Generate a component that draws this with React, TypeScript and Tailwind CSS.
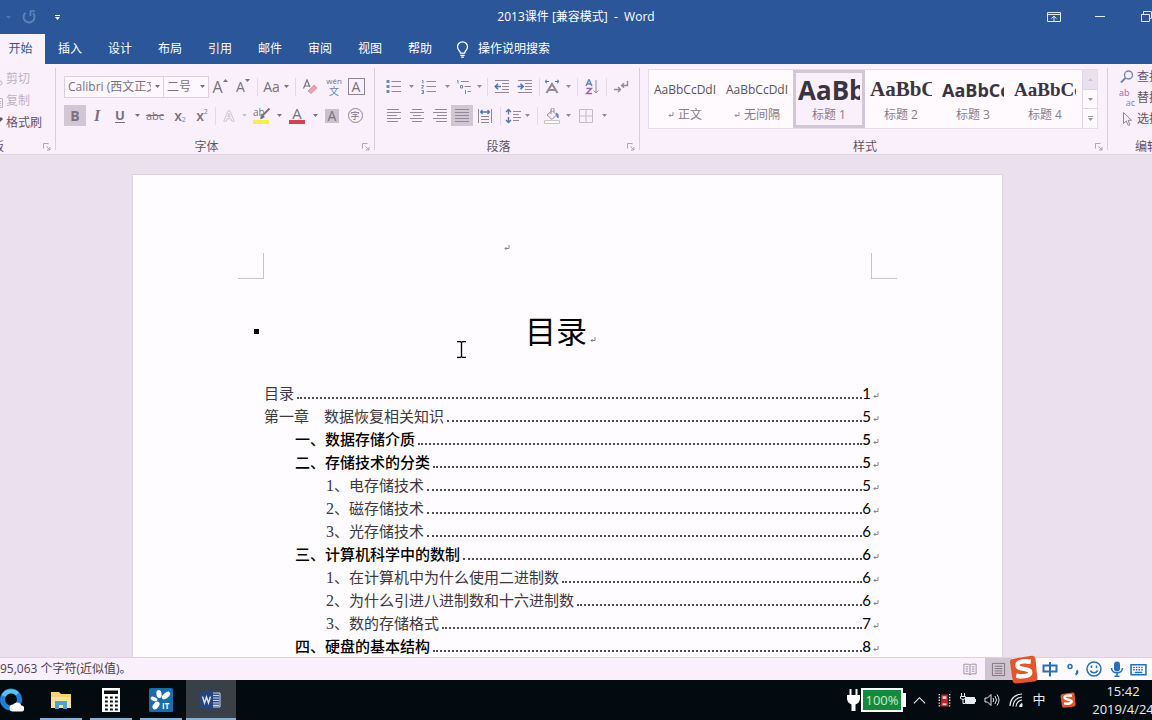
import type { ReactNode } from "react";
import { clsx } from "clsx";

const tabs = ["插入", "设计", "布局", "引用", "邮件", "审阅", "视图", "帮助"];

const styles = [
  { name: "正文", sample: "AaBbCcDdI", look: "text-[12px] text-[#5a505e]", mark: true },
  { name: "无间隔", sample: "AaBbCcDdI", look: "text-[12px] text-[#5a505e]", mark: true },
  { name: "标题 1", sample: "AaBb", look: "text-[26px] font-bold" },
  { name: "标题 2", sample: "AaBbC", look: "text-[21px] font-bold font-['Liberation_Serif',serif]" },
  { name: "标题 3", sample: "AaBbCc", look: "text-[18px] font-bold" },
  { name: "标题 4", sample: "AaBbCc", look: "text-[19px] font-bold font-['Liberation_Serif',serif]" },
];

const activeStyle = "标题 1";

const toc = [
  { level: 0, text: "目录", page: 1 },
  { level: 0, text: "第一章　数据恢复相关知识", page: 5 },
  { level: 1, text: "一、数据存储介质", page: 5 },
  { level: 1, text: "二、存储技术的分类", page: 5 },
  { level: 2, num: "1", text: "、电存储技术", page: 5 },
  { level: 2, num: "2", text: "、磁存储技术", page: 6 },
  { level: 2, num: "3", text: "、光存储技术", page: 6 },
  { level: 1, text: "三、计算机科学中的数制", page: 6 },
  { level: 2, num: "1", text: "、在计算机中为什么使用二进制数", page: 6 },
  { level: 2, num: "2", text: "、为什么引进八进制数和十六进制数", page: 6 },
  { level: 2, num: "3", text: "、数的存储格式", page: 7 },
  { level: 1, text: "四、硬盘的基本结构", page: 8 },
];

function Icon({ children, size = 16, className }: { children: ReactNode; size?: number; className?: string }) {
  return (
    <svg
      width={size}
      height={size}
      viewBox="0 0 16 16"
      fill="none"
      stroke="currentColor"
      aria-hidden="true"
      className={clsx("shrink-0", className)}
    >
      {children}
    </svg>
  );
}

function Caret({ className }: { className?: string }) {
  return (
    <svg width="5" height="3" viewBox="0 0 5 3" fill="currentColor" aria-hidden="true" className={clsx("shrink-0", className)}>
      <path d="M0 0h5L2.5 3z" />
    </svg>
  );
}

function ReturnMark({ className }: { className?: string }) {
  return (
    <svg width="6" height="6" viewBox="0 0 6 6" fill="none" stroke="currentColor" aria-hidden="true" className={clsx("shrink-0", className)}>
      <path d="M5 0v3.5H1M2.5 2 1 3.5 2.5 5" strokeWidth=".8" />
    </svg>
  );
}

function Tool({ label, w, children, active }: { label: string; w: string; children: ReactNode; active?: boolean }) {
  return (
    <button
      type="button"
      aria-label={label}
      className={clsx("flex h-[21px] shrink-0 items-center justify-center leading-none", w, active && "bg-[#d2c6d5]")}
    >
      {children}
    </button>
  );
}

function Sep({ w }: { w: string }) {
  return (
    <span className={clsx("flex h-[18px] shrink-0 justify-center", w)}>
      <span className="w-px bg-[#e3d8e6]" />
    </span>
  );
}

function Group({ label, className, labelClass, children, launcher = true }: {
  label: string;
  className?: string;
  labelClass?: string;
  children: ReactNode;
  launcher?: boolean;
}) {
  return (
    <section aria-label={label} className={clsx("relative flex h-full shrink-0 flex-col", className)}>
      <div className="flex-1">{children}</div>
      <div className="flex h-4 items-center pt-px">
        <span className={clsx("flex-1 whitespace-nowrap", labelClass ?? "text-center")}>{label}</span>
        {launcher && (
          <button type="button" aria-label={`${label}选项`} className="flex w-[18px] justify-center text-[#9d92a1]">
            <Icon size={8}>
              <path d="M1 11V1h10M7 7l7 7M14 8v6H8" strokeWidth="1.6" />
            </Icon>
          </button>
        )}
      </div>
      {launcher && <span className="absolute top-1 right-0 bottom-1 w-px bg-[#d9cddb]" />}
    </section>
  );
}

function TitleBar() {
  return (
    <header className="grid h-[34px] shrink-0 grid-cols-[1fr_auto_1fr] items-center bg-[#2b579a] text-white">
      <div className="flex items-center pl-1.5">
        <Caret className="text-[#5577b0]" />
        <button type="button" aria-label="重复" className="ml-2.5 text-[#5f82b9]">
          <Icon>
            <path d="M4.500 3.800A5.500 5.500 0 1 0 12 4.200" strokeWidth="1.9" />
            <path d="M9.500 7V2H14" strokeWidth="1.7" />
          </Icon>
        </button>
        <button type="button" aria-label="自定义快速访问工具栏" className="ml-[18px] flex flex-col gap-px">
          <span className="h-px w-[5px] bg-white" />
          <Caret />
        </button>
      </div>
      <h1 className="whitespace-pre text-[12px]">{"2013课件 [兼容模式]  -  Word"}</h1>
      <div className="flex justify-end overflow-hidden">
        <div className="-mr-[17px] flex text-[#dfe8f5]">
          <button type="button" aria-label="功能区显示选项" className="flex w-[46px] justify-center">
            <Icon>
              <path d="M1.5 3.5h13v9h-13zM1.5 5.5h13M8 12V7.5M5.5 9.5 8 7.2l2.5 2.3" />
            </Icon>
          </button>
          <button type="button" aria-label="最小化" className="flex w-[46px] justify-center">
            <Icon>
              <path d="M3 7.5h10" />
            </Icon>
          </button>
          <button type="button" aria-label="还原" className="flex w-[46px] justify-center">
            <Icon>
              <path d="M3.5 5.5h8v7h-8zM5.5 5.500v-3h8v7h-2" />
            </Icon>
          </button>
        </div>
      </div>
    </header>
  );
}

function TabBar() {
  return (
    <nav className="flex h-[30px] shrink-0 items-center bg-[#2b579a] text-white">
      <button type="button" className="h-full w-[45px] bg-[#faf1fc] pr-1 text-[#2b579a]">
        开始
      </button>
      {tabs.map((tab) => (
        <button key={tab} type="button" className="h-full w-[50px]">
          {tab}
        </button>
      ))}
      <button type="button" className="ml-[9px] flex h-full items-center gap-[7px]">
        <Icon size={17}>
          <path d="M6 11.5c0-2-2.7-3-2.7-6a4.7 4.7 0 0 1 9.4 0c0 3-2.7 4-2.7 6zM6 13.5h4M6.7 15.2h2.6" strokeWidth="1.2" />
        </Icon>
        操作说明搜索
      </button>
    </nav>
  );
}

function ClipboardGroup() {
  return (
    <Group label="板" className="w-14" labelClass="-ml-2">
      <div className="flex flex-col pt-1">
        <button type="button" className="-ml-3 flex h-[22px] items-center gap-0.5 whitespace-nowrap text-[#bdb2c0]">
          <Icon>
            <path d="M3 2l7 9M11 2 6 10" />
            <circle cx="12" cy="12" r="2" />
          </Icon>
          剪切
        </button>
        <button type="button" className="-ml-3 flex h-[22px] items-center gap-0.5 whitespace-nowrap text-[#bdb2c0]">
          <Icon>
            <path d="M2.500 2.500h6v8h-6zM7.500 5.500h7v9h-7zM9 8.500h4M9 10.500h4M9 12.500h4" />
          </Icon>
          复制
        </button>
        <button type="button" className="-ml-3 flex h-[22px] items-center gap-0.5 whitespace-nowrap text-[#5f5563]">
          <Icon>
            <path d="M9 8l5-5" strokeWidth="3" />
            <path d="M7 6l4 4-5 4-4-4z" className="fill-[#e9c98a]" />
          </Icon>
          格式刷
        </button>
      </div>
    </Group>
  );
}

function FontGroup() {
  return (
    <Group label="字体" className="w-[319px]">
      <div className="flex flex-col gap-2 pt-3 pl-2 text-[#7a707f]">
        <div className="flex h-[21px] items-center">
          <span className="relative flex items-center">
            <select aria-label="字体名称" className="h-[22px] w-[100px] appearance-none border border-[#ddd1df] bg-[#fdf8fe] pr-3 pl-[3px] text-[12px]">
              <option>Calibri (西文正文)</option>
            </select>
            <Caret className="pointer-events-none absolute right-1" />
          </span>
          <span className="relative -ml-px flex items-center">
            <select aria-label="字号" className="h-[22px] w-[46px] appearance-none border border-[#ddd1df] bg-[#fdf8fe] pr-3 pl-[3px] text-[12px]">
              <option>二号</option>
            </select>
            <Caret className="pointer-events-none absolute right-1" />
          </span>
          <Tool label="增大字号" w="w-[22px]">
            <span className="text-[16px]">A</span>
            <Caret className="mb-3 rotate-180" />
          </Tool>
          <Tool label="减小字号" w="w-6">
            <span className="text-[14px]">A</span>
            <Caret className="mb-3" />
          </Tool>
          <Sep w="w-1" />
          <Tool label="更改大小写" w="w-[34px]">
            <span className="mr-1 text-[14px]">Aa</span>
            <Caret />
          </Tool>
          <Sep w="w-1" />
          <Tool label="清除所有格式" w="w-[26px]">
            <Icon>
              <path d="M1.500 9.500 5 1l3 7M3 7h4" strokeWidth="1.200" />
              <path d="M6 12l6-6 3 3-6 5.500z" className="fill-[#eba4ad] stroke-[#e79aa6]" />
            </Icon>
          </Tool>
          <Tool label="拼音指南" w="w-[22px]">
            <span className="flex flex-col items-center text-[8px] leading-[9px]">
              <span>wén</span>
              <span className="text-[10px] leading-[12px] text-[#5f86b8]">文</span>
            </span>
          </Tool>
          <Tool label="字符边框" w="w-[22px]">
            <span className="flex h-[17px] w-[17px] items-center justify-center border border-[#8d8392] text-[14px] font-medium">A</span>
          </Tool>
        </div>
        <div className="flex h-[21px] items-center">
          <Tool label="加粗" w="w-[22px]" active>
            <b className="text-[14px]">B</b>
          </Tool>
          <Tool label="倾斜" w="w-[22px]">
            <i className="font-['Liberation_Serif',serif] text-[16px] font-bold">I</i>
          </Tool>
          <Tool label="下划线" w="w-6">
            <span className="border-b border-current text-[13px] leading-[13px] font-bold">U</span>
          </Tool>
          <Tool label="下划线样式" w="w-[10px]">
            <Caret />
          </Tool>
          <Tool label="删除线" w="w-[26px]">
            <span className="text-[11px] line-through">abc</span>
          </Tool>
          <Tool label="下标" w="w-6">
            <span className="text-[14px] font-semibold">x</span>
            <span className="mt-2 text-[7px] text-[#5f86b8]">2</span>
          </Tool>
          <Tool label="上标" w="w-5">
            <span className="text-[14px] font-semibold">x</span>
            <span className="mb-2 text-[7px] text-[#5f86b8]">2</span>
          </Tool>
          <Sep w="w-1.5" />
          <Tool label="文本效果" w="w-[22px]">
            <Icon size={14} className="text-[#c9bfcc]">
              <path d="M2 14 6.800 2h2.400L14 14h-2.800l-1-3H5.800l-1 3zM6.600 8.700h2.800L8 4.800z" />
            </Icon>
          </Tool>
          <Tool label="文本效果选项" w="w-2">
            <Caret className="text-[#cdc3d0]" />
          </Tool>
          <Tool label="突出显示颜色" w="w-[26px]">
            <span className="flex w-4 flex-col">
              <span className="flex h-[13px] items-start">
                <span className="text-[10px] leading-[11px]">ab</span>
                <Icon size={12} className="-ml-1.5">
                  <path d="M4 12 14 2M3 15l1-4 2 2z" strokeWidth="2.500" />
                </Icon>
              </span>
              <span className="h-1 bg-[#f6ee50]" />
            </span>
          </Tool>
          <Tool label="突出显示选项" w="w-[10px]">
            <Caret />
          </Tool>
          <Tool label="字体颜色" w="w-[26px]">
            <span className="flex w-4 flex-col items-center">
              <span className="text-[15px] leading-[13px]">A</span>
              <span className="h-1 w-full bg-[#cf4552]" />
            </span>
          </Tool>
          <Tool label="字体颜色选项" w="w-[10px]">
            <Caret />
          </Tool>
          <Tool label="字符底纹" w="w-6">
            <span className="flex h-[14px] w-[14px] items-center justify-center bg-[#cbc0ce] text-[14px] font-medium">A</span>
          </Tool>
          <Tool label="带圈字符" w="w-[22px]">
            <span className="flex h-[15px] w-[15px] items-center justify-center rounded-full border border-[#8d8392] text-[9px]">字</span>
          </Tool>
        </div>
      </div>
    </Group>
  );
}

function ParagraphGroup() {
  return (
    <Group label="段落" className="w-[265px]">
      <div className="flex flex-col gap-2 pt-3 pl-2 text-[#928897]">
        <div className="flex h-[21px] items-center">
          <Tool label="项目符号" w="w-[22px]">
            <Icon>
              <path d="M5.500 2.500H15M5.500 7.500H15M5.500 12.500H15" />
              <path d="M.5 2.500h3M.5 7.500h3M.5 12.500h3" className="stroke-[#6d8ab5]" strokeWidth="3" />
            </Icon>
          </Tool>
          <Tool label="项目符号库" w="w-3">
            <Caret />
          </Tool>
          <Tool label="编号" w="w-6">
            <Icon>
              <path d="M5.500 2.500H15M5.500 7.500H15M5.500 12.500H15" />
              <path d="M1 1.500h1v3M.5 6.500h2v1l-2 1.500h2M.5 11.500h2v3h-2M1 13h1" className="stroke-[#6d8ab5]" />
            </Icon>
          </Tool>
          <Tool label="编号库" w="w-3">
            <Caret />
          </Tool>
          <Tool label="多级列表" w="w-[22px]">
            <Icon>
              <path d="M5 2.500h8M8.500 7.500H15M11.500 12.500H15" />
              <path d="M1 1.500h1v3M4.500 6.500h2v2.500h-2zM9.500 11v4" className="stroke-[#6d8ab5]" />
            </Icon>
          </Tool>
          <Tool label="多级列表库" w="w-2">
            <Caret />
          </Tool>
          <Sep w="w-2" />
          <Tool label="减少缩进量" w="w-[22px]">
            <Icon>
              <path d="M1 1.500h14M8 4.500h7M8 7.500h7M8 10.500h7M1 13.500h14" />
              <path d="M7 7.500H1.500M4 4.800 1.300 7.500 4 10.200" className="stroke-[#4f78b0]" strokeWidth="1.600" />
            </Icon>
          </Tool>
          <Tool label="增加缩进量" w="w-6">
            <Icon>
              <path d="M1 1.500h14M8 4.500h7M8 7.500h7M8 10.500h7M1 13.500h14" />
              <path d="M.5 7.500H6M3.500 4.800l2.700 2.700-2.700 2.700" className="stroke-[#4f78b0]" strokeWidth="1.600" />
            </Icon>
          </Tool>
          <Sep w="w-1" />
          <Tool label="中文版式" w="w-[22px]">
            <Icon>
              <path d="M2.500 14 8 5l5.500 9M4.500 11h7" strokeWidth="2" />
              <path d="M1 2.500h4M3 .8 1 2.500l2 1.700M15 2.500h-4M13 .8l2 1.700-2 1.700" className="stroke-[#4f78b0]" />
            </Icon>
          </Tool>
          <Tool label="中文版式选项" w="w-[10px]">
            <Caret />
          </Tool>
          <Sep w="w-2" />
          <Tool label="排序" w="w-[22px]">
            <Icon>
              <path d="M2 7 5 .5 8 7M3.200 5h3.600" className="stroke-[#5f86b8]" strokeWidth="1.400" />
              <path d="M2.500 9.500h5l-5 5h5.500" className="stroke-[#9a66a8]" strokeWidth="1.400" />
              <path d="M12 1v13M9.700 11.500 12 14l2.300-2.500" />
            </Icon>
          </Tool>
          <Sep w="w-1.5" />
          <Tool label="显示编辑标记" w="w-6">
            <Icon>
              <path d="M14.500 2v4.500H9M11 4.200 8.700 6.500 11 8.800M1 10.500h6M5 8l2.500 2.500L5 13" strokeWidth="1.400" />
            </Icon>
          </Tool>
        </div>
        <div className="flex h-[21px] items-center">
          <Tool label="左对齐" w="w-[22px]">
            <Icon>
              <path d="M1 1.500h12M1 4.500h14M1 7.500h10M1 10.500h14M1 13.500h11" />
            </Icon>
          </Tool>
          <Tool label="居中" w="w-6">
            <Icon>
              <path d="M3 1.500h10M1 4.500h14M4 7.500h8M1 10.500h14M3 13.500h10" />
            </Icon>
          </Tool>
          <Tool label="右对齐" w="w-[22px]">
            <Icon>
              <path d="M3 1.500h12M1 4.500h14M5 7.500h10M1 10.500h14M4 13.500h11" />
            </Icon>
          </Tool>
          <Tool label="两端对齐" w="w-[22px]" active>
            <Icon>
              <path d="M1 1.500h14M1 4.500h14M1 7.500h14M1 10.500h14M1 13.500h14" />
            </Icon>
          </Tool>
          <Tool label="分散对齐" w="w-6">
            <Icon>
              <path d="M1.500 1v14M14.500 1v14M4 8.500h8M4 11.500h8M4 14.500h8" />
              <path d="M3.500 4h9M5.500 2 3.500 4l2 2M10.500 2l2 2-2 2" className="stroke-[#4f78b0]" strokeWidth="1.300" />
            </Icon>
          </Tool>
          <Sep w="w-1.5" />
          <Tool label="行和段落间距" w="w-5">
            <Icon>
              <path d="M8 3.500h8M8 6.500h6M8 9.500h8M8 12.500h6" />
              <path d="M3.500 1.500v5M1 4l2.500-2.500L6 4M3.500 9v5.500M1 12l2.500 2.500L6 12" className="stroke-[#4f78b0]" strokeWidth="1.400" />
            </Icon>
          </Tool>
          <Tool label="行距选项" w="w-2">
            <Caret />
          </Tool>
          <Sep w="w-3" />
          <Tool label="底纹" w="w-[18px]">
            <Icon>
              <path d="M3 7l5-4.500L12.500 7 8 11.500zM7 6V1.500a1.500 1.500 0 0 1 3 0V4" />
              <path d="M12.500 5c2 1 2 3 1.500 5-1-1-1.500-2-1.500-5z" className="fill-[#5f86b8] stroke-[#5f86b8]" />
              <path d="M.5 12.500h15v3H.5z" className="fill-white stroke-[#cfc5c4]" />
            </Icon>
          </Tool>
          <Tool label="底纹颜色" w="w-[14px]">
            <Caret />
          </Tool>
          <Tool label="边框" w="w-[22px]">
            <Icon className="text-[#c4bac7]">
              <path d="M1.500 1.500h13v13h-13zM8 1.500v13M1.500 8h13" />
            </Icon>
          </Tool>
          <Tool label="边框选项" w="w-[14px]">
            <Caret />
          </Tool>
        </div>
      </div>
    </Group>
  );
}

function StylesGroup() {
  return (
    <Group label="样式" className="min-w-0 flex-1">
      <div className="mt-[5px] mr-[10px] ml-2 flex h-[60px] overflow-hidden border border-[#e6dbe8] bg-[#fefafe]">
        <div className="flex flex-1">
          {styles.map((style) => (
            <button
              key={style.name}
              type="button"
              className={clsx(
                "flex w-[72px] shrink-0 flex-col border-[3px] px-0.5",
                style.name === activeStyle ? "border-[#d3c6d6] bg-[#faf0fc]" : "border-transparent",
              )}
            >
              <span className={clsx("flex h-[34px] w-full items-center overflow-hidden whitespace-nowrap text-[#3b3340]", style.look)}>
                {style.sample}
              </span>
              <span className="flex h-4 w-full items-center justify-center gap-1 text-[#877c8b]">
                {style.mark && <ReturnMark />}
                {style.name}
              </span>
            </button>
          ))}
        </div>
        <div className="flex w-[15px] flex-col border-l border-[#e0d5e3] text-[#9d92a1]">
          <button type="button" aria-label="上一行" className="flex flex-1 items-center justify-center bg-[#ebe0ed]">
            <Caret className="rotate-180 text-[#cdc2d0]" />
          </button>
          <button type="button" aria-label="下一行" className="flex flex-1 items-center justify-center border-y border-[#e0d5e3]">
            <Caret />
          </button>
          <button type="button" aria-label="其他样式" className="flex flex-1 flex-col items-center justify-center gap-px">
            <span className="h-px w-[5px] bg-current" />
            <Caret />
          </button>
        </div>
      </div>
    </Group>
  );
}

function EditingGroup() {
  return (
    <Group label="编辑" className="w-11 overflow-hidden" labelClass="pl-[27px]" launcher={false}>
      <div className="flex flex-col pt-[2px] pl-[11px] text-[#5f5563]">
        <button type="button" className="flex h-[21px] items-center gap-0.5 whitespace-nowrap">
          <Icon className="text-[#7088ad]">
            <circle cx="9.500" cy="6" r="4" strokeWidth="1.400" />
            <path d="M6.500 9 2 13.500" strokeWidth="2" />
          </Icon>
          查找
        </button>
        <button type="button" className="flex h-[21px] items-center gap-0.5 whitespace-nowrap">
          <span className="flex w-4 shrink-0 flex-col text-[9px] leading-[10px] text-[#9a66a8]">
            <span className="self-start">ab</span>
            <span className="self-end text-[#6d8ab5]">ac</span>
          </span>
          替换
        </button>
        <button type="button" className="flex h-[21px] items-center gap-0.5 whitespace-nowrap">
          <Icon className="text-[#928897]">
            <path d="M4.500 1.500v11l2.800-2.500 2 4.500 1.700-.8-2-4.400h3.500z" />
          </Icon>
          选择
        </button>
      </div>
    </Group>
  );
}

function Document() {
  return (
    <main className="min-h-0 flex-1 overflow-hidden bg-[#ebe0ed] pt-[19px] pr-[17px]">
      <article className="relative mx-auto h-full w-[871px] border-x border-t border-[#ddd3df] bg-[#fefcfe] pt-[68px] text-[#3d373f]">
        <div className="mx-[105px] flex h-9 justify-between">
          <span className="h-[26px] w-[26px] self-end border-r border-b border-[#c9c4ca]" />
          <ReturnMark className="mt-0.5 mr-auto ml-60 text-[#6f6b70]" />
          <span className="h-[26px] w-[26px] self-end border-b border-l border-[#c9c4ca]" />
        </div>
        <div className="mx-[131px]">
          <div className="relative flex h-[103px] items-center justify-center pt-0.5 pr-[14px]">
            <span className="absolute -left-[10px] h-[5px] w-[5px] bg-black" />
            <h2 className="text-[31px] leading-none text-black">目录</h2>
            <ReturnMark className="mt-4 ml-[3px] text-[#6f6b70]" />
          </div>
          <ol>
            {toc.map((entry) => (
              <li
                key={entry.text}
                className={clsx(
                  "relative flex h-[23px] items-center text-[15px] whitespace-nowrap",
                  entry.level === 1 && "pl-[31px] font-medium text-black",
                  entry.level === 2 && "pl-[62px]",
                )}
              >
                <a href="#toc" className="flex flex-1 items-center">
                  {entry.num && <span className="font-['Liberation_Serif',serif] text-[16px]">{entry.num}</span>}
                  <span>{entry.text}</span>
                  <span className="mt-2 ml-[3px] flex-1 border-t-2 border-dotted border-[#514c53]" />
                  <span className="font-[Lato,sans-serif] text-black">{entry.page}</span>
                </a>
                <ReturnMark className="absolute -right-2 mt-1 text-[#6f6b70]" />
              </li>
            ))}
          </ol>
        </div>
        {/* text cursor */}
        <svg width="9" height="17" viewBox="0 0 9 17" fill="none" stroke="black" aria-hidden="true" className="absolute top-[166px] left-[324px]">
          <path d="M0 .7h3.500l1 .8 1-.8H9M4.500 1v15M0 16.300h3.500l1-.8 1 .8H9" strokeWidth="1.300" />
        </svg>
      </article>
    </main>
  );
}

function SogouLogo({ size, className }: { size: number; className?: string }) {
  return (
    <svg width={size} height={size} viewBox="0 0 28 28" aria-hidden="true" className={clsx("shrink-0", className)}>
      <path d="M4 3.500 22 .8q3-.3 3.500 2.500L27.300 22q.2 3-2.600 3.500L7 27.500q-3 .2-3.500-2.600L1 7Q.8 4 4 3.500z" fill="#e2562d" />
      <path d="M21 6.500c-6-1-13-.5-13 3.300 0 4.700 12.500 2.700 12.500 7 0 3.500-6.500 4.400-13.500 3.200" fill="none" stroke="white" strokeWidth="4.200" />
    </svg>
  );
}

function StatusBar() {
  return (
    <footer className="flex h-[23px] shrink-0 items-center border-t border-[#e3d0e3] bg-[#faeffc] text-[#4a414e]">
      <span className="whitespace-nowrap">95,063 个字符(近似值)。</span>
      <button type="button" aria-label="阅读视图" className="ml-auto flex w-[30px] justify-center text-[#928897]">
        <Icon size={14}>
          <path d="M1 2.500h5l2 1 2-1h5v11h-5l-2 1-2-1H1zM8 3.500v11M3 5.500h3M3 8h3M3 10.500h3M10 5.500h3M10 8h3M10 10.500h3" />
        </Icon>
      </button>
      <button type="button" aria-label="页面视图" className="flex h-full w-[27px] items-center justify-center bg-[#cfc4d2] text-[#7a707f]">
        <Icon size={15}>
          <path d="M1.500 1.500h13v13h-13zM4 4.500h8M4 7h8M4 9.500h8M4 12h8" />
        </Icon>
      </button>
      {/* input method bar */}
      <div className="flex h-full items-center bg-[#fffafe] text-[#2470b8]">
        <span className="flex w-[26px] justify-end">
          <SogouLogo size={29} className="relative" />
        </span>
        <button type="button" aria-label="中英文切换" className="flex w-[24px] justify-center">
          <Icon>
            <path d="M1.500 4.500h13v6h-13zM8 1v14.500" strokeWidth="2" />
          </Icon>
        </button>
        <button type="button" aria-label="标点" className="flex w-[21px] justify-center">
          <Icon>
            <circle cx="5" cy="5.500" r="2" strokeWidth="1.500" />
            <path d="M11.500 9.500c1.500 1 1 3-1 4" strokeWidth="2.200" />
          </Icon>
        </button>
        <button type="button" aria-label="表情" className="flex w-[22px] justify-center">
          <Icon>
            <circle cx="8" cy="8" r="7" strokeWidth="1.500" />
            <path d="M5.500 4.500V7M10.500 4.500V7M4.500 9.500c1 3 6 3 7 0" strokeWidth="1.500" />
          </Icon>
        </button>
        <button type="button" aria-label="语音" className="flex w-[23px] justify-center">
          <Icon>
            <path d="M8 3.500v4" strokeWidth="6" strokeLinecap="round" />
            <path d="M2.500 7c0 6.500 11 6.500 11 0M8 12v3.500M5.500 15.300h5" strokeWidth="1.600" />
          </Icon>
        </button>
        <button type="button" aria-label="软键盘" className="flex w-6 justify-center pr-1">
          <Icon size={17}>
            <path d="M1 3.500h14v9.500H1z" strokeWidth="1.500" />
            <path d="M3 6h10M3 8.300h10" strokeWidth="1.400" strokeDasharray="1.500 1" />
            <path d="M4.500 10.800h7" strokeWidth="1.400" />
          </Icon>
        </button>
      </div>
    </footer>
  );
}

function TaskApp({ label, children, active }: { label: string; children: ReactNode; active?: boolean }) {
  return (
    <button
      type="button"
      aria-label={label}
      className={clsx("flex h-full w-[50px] flex-col items-center", active ? "bg-[#3a4048]" : "px-1")}
    >
      <span className="flex flex-1 items-center pt-0.5">{children}</span>
      <span className="h-0.5 w-full bg-[#7fb2dc]" />
    </button>
  );
}

function Taskbar() {
  return (
    <footer className="flex h-10 shrink-0 items-center bg-[#040b10] text-[#e8ecee]">
      <button type="button" aria-label="浏览器" className="flex w-9">
        <svg width="24" height="24" viewBox="0 0 24 24" aria-hidden="true">
          <circle cx="11" cy="11.500" r="8.500" fill="none" stroke="#1e7fd8" strokeWidth="5" />
          <path d="M3.500 8a8.500 8.500 0 0 1 14-2" fill="none" stroke="#5cc0f2" strokeWidth="4" />
          <path d="M13 23.500a3.500 3.500 0 0 1 0-7 5 5 0 0 1 8.500 1 3 3 0 0 1-.5 6z" fill="white" />
        </svg>
      </button>
      <TaskApp label="文件资源管理器">
        <svg width="22" height="22" viewBox="0 0 22 22" aria-hidden="true">
          <path d="M1 3h8l2 2h10v14H1z" fill="#f3d27c" />
          <path d="M1 8h20v11H1z" fill="#f9e19c" />
          <path d="M5 20v-8h12v8h-4v-4H9v4z" fill="#4ba3cf" />
        </svg>
      </TaskApp>
      <TaskApp label="计算器">
        <svg width="18" height="24" viewBox="0 0 18 24" aria-hidden="true">
          <path d="M0 0h18v24H0z" fill="white" />
          <path d="M2 2.500h14V6H2z" fill="#0a1014" />
          <path d="M3 9.500h13M3 13.500h13M3 17.500h13M3 21.500h13" stroke="#0a1014" strokeWidth="2" strokeDasharray="2.800 2.200" />
        </svg>
      </TaskApp>
      <TaskApp label="IT">
        <svg width="24" height="24" viewBox="0 0 24 24" aria-hidden="true">
          <rect width="24" height="24" rx="1.500" fill="#1d6ba8" />
          <g fill="white">
            <ellipse cx="10" cy="6" rx="2.600" ry="4" transform="rotate(-8 10 6)" />
            <ellipse cx="17" cy="7.500" rx="2.600" ry="5" transform="rotate(48 17 7.500)" />
            <ellipse cx="5" cy="11" rx="2" ry="3.600" transform="rotate(-65 5 11)" />
            <ellipse cx="7" cy="17.500" rx="2.700" ry="4.500" transform="rotate(38 7 17.500)" />
          </g>
          <text x="13" y="21" fill="white" fontSize="8" fontWeight="700" fontFamily="Open Sans, sans-serif">IT</text>
        </svg>
      </TaskApp>
      <TaskApp label="Word" active>
        <svg width="22" height="20" viewBox="0 0 22 20" aria-hidden="true">
          <path d="M11 3h9v14h-9z" fill="#33528f" stroke="#c9d5ea" />
          <path d="M12 5.500h7M12 8h7M12 10.500h7M12 13h7M12 15.300h7" stroke="#c9d5ea" strokeWidth="1.200" />
          <path d="M0 2l13-2v20L0 18z" fill="#26457f" />
          <path d="M2.500 6.500 4.500 13l2-6 2 6 2-6.500" fill="none" stroke="#dfe6f3" strokeWidth="1.400" />
        </svg>
      </TaskApp>

      <div className="ml-auto flex items-center">
        <svg width="13" height="24" viewBox="0 0 13 24" fill="white" aria-hidden="true">
          <path d="M2.500 1h2v6h4V1h2v6H13v4q-.5 4-4.500 5.500V23h-4v-6.500Q.5 15 0 11V7h2.500z" />
        </svg>
        <span className="ml-px flex h-6 w-[42px] items-center justify-center border-2 border-white bg-[#158a3c] text-[13px] leading-none text-[#c9ecd0]">
          100%
        </span>
        <span className="h-3.5 w-[3px] bg-white" />
        <button type="button" aria-label="显示隐藏的图标" className="flex w-[26px] justify-center">
          <Icon size={15}>
            <path d="M2 11l6-6 6 6" strokeWidth="1.200" />
          </Icon>
        </button>
        <span className="flex w-6 justify-center">
          <Icon size={15}>
            <path d="M2.500 1v14M13.500 1v14" strokeWidth="1.500" strokeDasharray="1.500 1.500" />
            <path d="M4.500 1.500h7V9l1 5.500h-9l1-5.500z" fill="#c8202f" stroke="none" />
            <path d="M6 3.500h4v3H6zM6 11h4v2H6z" fill="#f0d5d8" stroke="none" />
          </Icon>
        </span>
        <span className="flex w-6 justify-center">
          <Icon>
            <path d="M5.500 5.500h9v6h-9z" fill="currentColor" />
            <path d="M15.500 7v3" />
            <path d="M1.500 1v3M4.500 1v3M.5 4.500h5v2q-2.500 2-5 0zM3 7v4.500h2" />
          </Icon>
        </span>
        <span className="flex w-6 justify-center">
          <Icon>
            <path d="M1 6h2.500L7 2.500v11L3.500 10H1zM9 6q1.500 2 0 4M11 4q3 4 0 8M13 2.500q4 5.500 0 11" />
          </Icon>
        </span>
        <span className="flex w-6 justify-center">
          <Icon>
            <path d="M2 14Q2.500 3 14 2M5 14.500Q5.500 6 14 5M8 14.500Q8.500 9 14 8" strokeWidth="1.200" />
            <path d="M11.500 14.500Q12 12 14 11.500v3z" fill="currentColor" />
          </Icon>
        </span>
        <span className="flex w-[22px] justify-center text-[13px]">中</span>
        <span className="flex w-[36px] justify-center">
          <SogouLogo size={16} />
        </span>
        <time className="flex w-[66px] flex-col items-center pl-2 text-[13px] leading-[18px] whitespace-nowrap">
          <span>15:42</span>
          <span>2019/4/24</span>
        </time>
      </div>
    </footer>
  );
}

export default function App() {
  return (
    <div className="flex h-screen flex-col overflow-hidden font-['Open_Sans','Noto_Sans_CJK_SC',sans-serif] text-[12px] text-[#5f5563]">
      <TitleBar />
      <TabBar />
      <div className="flex h-[91px] shrink-0 overflow-hidden border-b border-[#dfd4e1] bg-[#faf0fc]">
        <ClipboardGroup />
        <FontGroup />
        <ParagraphGroup />
        <StylesGroup />
        <EditingGroup />
      </div>
      <Document />
      <StatusBar />
      <Taskbar />
    </div>
  );
}
